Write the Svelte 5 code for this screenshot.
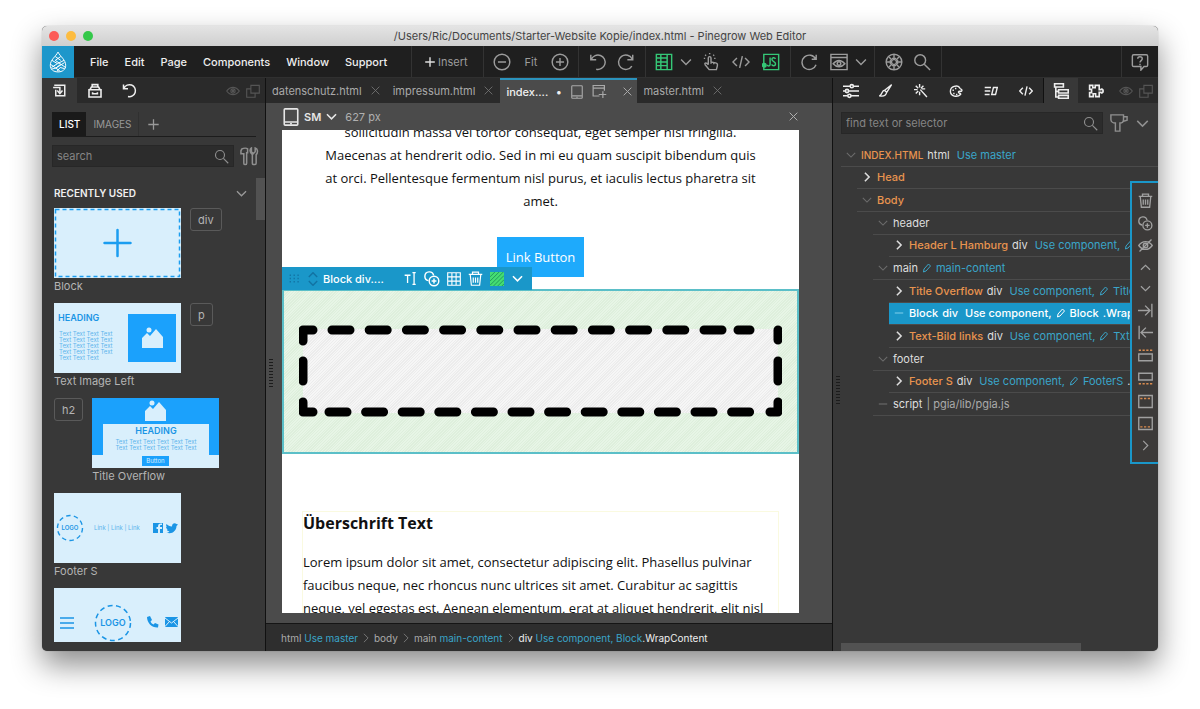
<script>
  const icons = {
    logo: '<path d="M10 1C8 5 3 8 3 13c0 4 3 6 7 6s7-2 7-6c0-5-5-8-7-12z"/><path d="M7.500 5l5 3.500M12.500 5l-5 3.500M4.500 8.500l5 3 6-3M3 12l5 3.500 4.500-3.500L17 15M4 16.500l4-1 4 3M7.500 8.500l5 3.500M16 10.500l-8 5M9.500 11.500L4 15M16 16l-4-1-3 3.500"/>',
    import: '<path d="M3 3h14v14H5V9M1.500 6h9v7"/><path d="M7 10l3.500 4 3.500-4" />',
    library: '<path d="M2.500 8.500h15v9h-15zM3.500 8.500L5.500 5h9l2 3.500M6.500 5V2h7v3M7 11.500v2h6v-2"/>',
    undo: '<path d="M2 2v5.500h6M2.600 7A8 8 0 1 1 8 18"/>',
    redo: '<path d="M17.500 2v5.500h-6M17 7a8 8 0 1 0-.5 7.500"/>',
    eye: '<path d="M1 10c5-7 13-7 18 0-5 7-13 7-18 0z"/><circle cx="10" cy="10" r="3"/><circle cx="10" cy="10" r="1" fill="currentColor"/>',
    windows: '<path d="M7 2h12v11H7zM7 7H1v12h12v-6"/>',
    plus: '<path d="M10 2v16M2 10h16"/>',
    search: '<circle cx="8" cy="8" r="6"/><path d="M12.500 12.500L19 19"/>',
    tools: '<path d="M2 2c2-1 5-1 6 0v4H7v11c0 2-3 2-3 0V7H1V4zM12 1v4l2 2 2-2V1c3 1 3 5 1 7v9c0 2-4 2-4 0V8c-3-2-3-6-1-7z"/>',
    down: '<path d="M3 6.500l7 7 7-7"/>',
    up: '<path d="M3 13.500l7-7 7 7"/>',
    right: '<path d="M6.500 3l7 7-7 7"/>',
    dash: '<path d="M3 10h14"/>',
    close: '<path d="M3 3l14 14M17 3L3 17"/>',
    minusRound: '<circle cx="10" cy="10" r="8.700"/><path d="M5.500 10h9"/>',
    plusRound: '<circle cx="10" cy="10" r="8.700"/><path d="M5.500 10h9M10 5.500v9"/>',
    layout: '<path d="M1.500 1.500h17v17h-17zM1.500 5.500h12M1.500 14h12M6.500 1.500v4M6.500 14v4.500M13.500 1.500v17M6.500 10h7M6.500 5.500V14M1.500 10h5"/>',
    hand: '<path d="M7 13V5.500c0-2 3-2 3 0V10l5 1c2 .5 2.500 1.500 2 3.500l-1 4H8L3.500 13c-1-1.500.5-2.500 2-1.500L7 13M10 10v2M13 11v1.500M8.500 1.500V0M4.500 3L3.500 2M12.500 3l1-1M3.500 6H2M13.500 6H15"/>',
    code: '<path d="M5.500 5.500L1 10l4.500 4.500M14.500 5.500L19 10l-4.500 4.500M11.500 3.500l-3 13"/>',
    js: '<path d="M2 1.500h16.500v17H2z"/><path d="M9 5v7.500c0 2.500-3 2.500-3 .5M15 6.500c-1-2-4-1.500-4 .5 0 3 4 2 4 5s-4 2.500-4 .5"/><circle cx="2.500" cy="13.500" r="2" fill="currentColor"/>',
    reload: '<path d="M18 2v5h-5M17.500 7a8 8 0 1 0 .3 6"/>',
    preview: '<path d="M1 1.500h18v17H1zM1 5h18"/><path d="M3.500 12c4-5 9-5 13 0-4 4.500-9 4.500-13 0z"/><circle cx="10" cy="11.800" r="2"/>',
    helm: '<circle cx="10" cy="10" r="8.700"/><path d="M10 2v5.500M10 12.500V18M2 10h5.500M12.500 10H18M4.500 4.500l4 4M11.500 11.500l4 4M15.500 4.500l-4 4M8.500 11.500l-4 4M8 5.500l2 2 2-2M8 14.500l2-2 2 2M5.500 8l2 2-2 2M14.500 8l-2 2 2 2"/>',
    help: '<path d="M3 2h14c1 0 1.500.5 1.500 1.500v10c0 1-.5 1.500-1.500 1.500h-2.500l-3.500 4v-4H3c-1 0-1.500-.5-1.500-1.500v-10C1.500 2.500 2 2 3 2z"/><path d="M7.500 6.500c0-3 5-3 5 0 0 2-2.500 2-2.500 4M10 12v1.500"/>',
    tablet: '<rect x="2.500" y="1" width="15" height="18" rx="1"/><path d="M3 15.500h14" /><path d="M9 17.500h2"/>',
    addPage: '<path d="M10 16H1.500V2h15v7M1.500 5.500h15M9 14h10M14.500 9.500v9"/>',
    sliders: '<path d="M0 4h9M13 4h7M0 10h3M7 10h13M0 16h6M10 16h10"/><circle cx="11" cy="4" r="2"/><circle cx="5" cy="10" r="2"/><circle cx="8" cy="16" r="2"/>',
    brush: '<path d="M18 1L8 9l3 3zM8 9c-4 0-3 5-7 8 5 1 9-1 10-5"/>',
    wand: '<path d="M9 8l9.500 10.500M8 0v5M8 11v5M0 8h5M11 7h5M2.500 2.500L6 6M13.500 2.500L10 6M2.500 13.500L6 10"/>',
    palette: '<path d="M15 5C12 1 2 3 2 10.500s10 9 14.500 4.500c1.500-2-4-1.500-3-4 1-2 5 1 5-2 0-2-3-1-3.500-4z"/><path fill="currentColor" stroke="none" d="M5 8h2v2H5zM8.500 5.500h2v2h-2zM6 12.500h2v2H6zM10 14h2v2h-2z"/>',
    align: '<path d="M1 5h9M1 10h8M1 15h7M13.500 5H19l-2.500 10H11z"/>',
    tree: '<path d="M2 1h11v4H2zM7 8.500h12v4H7zM7 15.500h12v3.500H7zM3.500 5v12.500H7M3.500 10.500H7"/>',
    puzzle: '<path d="M2 3h4v3h3V3h5v5.500h2c0-1.500 3-1.500 3 1.500s-3 3-3 1.500h-2V17H9.500v-3.500h-3V17H2v-5h2.500V8H2z"/>',
    filter: '<path d="M1 1h14v5c0 3-2 4-4 4v9H6v-9C3 10 1 8 1 6zM15 3h4v4l-4 1"/>',
    pencil: '<path d="M4 12L13 2l4 4L8 16l-5 2z"/>',
    trash: '<path d="M1 4.500h18M6 4.500v-3h8v3M3 5l1.500 14h11L17 5M7 8.500v7M10 8.500v7M13 8.500v7"/>',
    clone: '<circle cx="12.500" cy="12.500" r="6"/><path d="M12.500 9.500v6M9.500 12.500h6M5.500 12A5.500 5.500 0 1 1 12 5.500"/>',
    hide: '<path d="M1 10c5-7 13-7 18 0-5 7-13 7-18 0zM2 18L18 2"/><circle cx="10" cy="10" r="3"/>',
    indent: '<path d="M0 10h16M9.500 3.500L16 10l-6.500 6.500M18.500 1v18"/>',
    outdent: '<path d="M20 10H4M10.500 3.500L4 10l6.500 6.500M1.500 1v18"/>',
    before: '<path d="M1 8h18v9H1z"/><path stroke="#d98b4f" stroke-dasharray="3 2" d="M1 3h18"/>',
    after: '<path d="M1 3h18v9H1z"/><path stroke="#d98b4f" stroke-dasharray="3 2" d="M1 17h18"/>',
    first: '<path d="M1 2h18v16H1z"/><path stroke="#d98b4f" stroke-dasharray="3 2" d="M3 6h14"/>',
    last: '<path d="M1 2h18v16H1z"/><path stroke="#d98b4f" stroke-dasharray="3 2" d="M3 14.500h14"/>',
    text: '<path d="M1 5h9M5.500 5v12M13 1h5M13 19h5M15.500 1v18"/>',
    grid: '<path d="M1 1h18v18H1zM7 1v18M13 1v18M1 7h18M1 13h18"/>',
    hatch: '<path fill="#45dd72" stroke="none" d="M0 0h20v20H0z"/><path stroke="#229a5c" stroke-width="1.400" d="M0 7l7-7M0 13L13 0M0 19L19 0M5 20L20 5M11 20l9-9M17 20l3-3"/>',
    sort: '<path d="M4 7l6-6 6 6M4 13l6 6 6-6"/>',
    dots: '<path stroke-dasharray="2 4" d="M1 5h18M1 10h18M1 15h18"/>',
  }

  const menus = ['File', 'Edit', 'Page', 'Components', 'Window', 'Support']
  const panelTabs = ['sliders', 'brush', 'wand', 'palette', 'align', 'code', 'tree', 'puzzle']
  const treeTools = ['trash', 'clone', 'hide', 'up', 'down', 'indent', 'outdent', 'before', 'after', 'first', 'last', 'right']

  const nodes = [
    { depth: 0, state: 'open', name: 'INDEX.HTML', small: true, tag: 'html', use: 'Use master' },
    { depth: 1, state: 'closed', name: 'Head' },
    { depth: 1, state: 'open', name: 'Body' },
    { depth: 2, state: 'open', tag: 'header' },
    { depth: 3, state: 'closed', name: 'Header L Hamburg', tag: 'div', use: 'Use component,', edit: ' ' },
    { depth: 2, state: 'open', tag: 'main', edit: 'main-content' },
    { depth: 3, state: 'closed', name: 'Title Overflow', tag: 'div', use: 'Use component,', edit: 'Title' },
    { depth: 3, state: 'leaf', name: 'Block', tag: 'div', use: 'Use component,', edit: 'Block', cls: '.Wrap', selected: true },
    { depth: 3, state: 'closed', name: 'Text-Bild links', tag: 'div', use: 'Use component,', edit: 'TxtI' },
    { depth: 2, state: 'open', tag: 'footer' },
    { depth: 3, state: 'closed', name: 'Footer S', tag: 'div', use: 'Use component,', edit: 'FooterS', cls: '.' },
    { depth: 2, state: 'leaf', tag: 'script', note: '| pgia/lib/pgia.js' },
  ]
  const toggles = { open: 'down', closed: 'right', leaf: 'dash' }

  // dashed frame around the empty block
  let frame = 'M4 16V5H14M439 5H451M479 5V15M479 36V56M479 77V87H471M4 77V87H14M4 36V56'
  for (let i = 0; i < 11; i++) frame += `M${33 + i * 37.2} 5h18`
  for (let i = 0; i < 12; i++) frame += `M${30 + i * 36.6} 87h18`

  let search = $state('')
  let selector = $state('')
  let tab = $state('LIST')
</script>

{#snippet icon(name, size = 16, weight = 1.6)}
  <svg width={size} height={size} viewBox="0 0 20 20" fill="none" stroke="currentColor" stroke-width={weight} aria-hidden="true">{@html icons[name]}</svg>
{/snippet}

{#snippet tool(name, size = 18, weight = 1.6)}
  <button class="t-{name}" aria-label={name}>{@render icon(name, size, weight)}</button>
{/snippet}

{#snippet mountains(x, y)}
  <path fill="#d9effc" d="M{x} {y + 12}v-4l5-5 3 3 6-7 7 8v11h-21z" />
  <circle fill="#d9effc" cx={x + 7} cy={y} r="2.500" />
{/snippet}

<div class="window">
  <header class="titlebar">
    <div class="lights"><i class="red"></i><i class="yellow"></i><i class="green"></i></div>
    <span>/Users/Ric/Documents/Starter-Website Kopie/index.html - Pinegrow Web Editor</span>
  </header>

  <div class="toolbar">
    <div class="logo">{@render icon('logo', 22, 0.9)}</div>
    <nav class="menu">
      {#each menus as m}<button>{m}</button>{/each}
    </nav>
    <div class="group insert"><button>{@render icon('plus', 12, 2.4)} Insert</button></div>
    <div class="group zoom">{@render tool('minusRound')}<span>Fit</span>{@render tool('plusRound')}</div>
    <div class="group history">{@render tool('undo')}{@render tool('redo')}</div>
    <div class="group modes">
      <span class="on">{@render tool('layout')}</span>
      {@render tool('down', 14, 2)}
      {@render tool('hand')}
      {@render tool('code')}
      <span class="on">{@render tool('js')}</span>
    </div>
    <div class="group view">{@render tool('reload')}{@render tool('preview')}{@render tool('down', 14, 2)}</div>
    <div class="group find">{@render tool('helm')}{@render tool('search')}</div>
    <div class="group help">{@render tool('help')}</div>
  </div>

  <div class="workspace">
    <aside class="left">
      <div class="strip">
        <button class="strip-btn active" aria-label="Insert panel">{@render icon('import', 15, 2)}</button>
        <button class="strip-btn" aria-label="Library">{@render icon('library', 16, 2)}</button>
        <button class="strip-btn" aria-label="History">{@render icon('undo', 15, 2)}</button>
        <div class="strip-end">{@render tool('eye', 14)}{@render tool('windows', 14)}</div>
      </div>
      <div class="list-tabs">
        <button class:current={tab === 'LIST'} onclick={() => (tab = 'LIST')}>LIST</button>
        <button class:current={tab === 'IMAGES'} onclick={() => (tab = 'IMAGES')}>IMAGES</button>
        <button class="add" aria-label="Add list">{@render icon('plus', 13, 2)}</button>
      </div>
      <div class="search-row">
        <div class="field">
          <input aria-label="Search" placeholder="search" bind:value={search} />
          {@render icon('search', 15, 1.5)}
        </div>
        {@render tool('tools', 19)}
      </div>
      <div class="section">
        <h2>RECENTLY USED</h2>
        {@render tool('down', 13, 2)}
      </div>
      <div class="blocks">
        <figure>
          <svg viewBox="0 0 127 70">
            <rect width="127" height="70" fill="#d9effc" />
            <rect x="1.500" y="1.500" width="124" height="67" fill="none" stroke="#1b9df0" stroke-width="1.500" stroke-dasharray="4 3" />
            <path stroke="#1b9df0" stroke-width="2.500" stroke-linecap="round" d="M63.500 22v26M50.500 35h26" />
          </svg>
          <figcaption>Block</figcaption>
        </figure>
        <button class="tag">div</button>
        <figure>
          <svg viewBox="0 0 127 70">
            <rect width="127" height="70" fill="#d9effc" />
            <rect x="74" y="11" width="48" height="48" fill="#1ba1fc" />
            {@render mountains(88, 27)}
            <text x="4" y="18" class="card-heading">HEADING</text>
            {#each [0, 1, 2, 3] as i}<text x="5" y={33 + i * 6} class="card-text">Text Text Text Text</text>{/each}
            <text x="5" y="57" class="card-text">Text Text Text</text>
          </svg>
          <figcaption>Text Image Left</figcaption>
        </figure>
        <button class="tag">p</button>
        <button class="tag">h2</button>
        <figure>
          <svg viewBox="0 0 127 70">
            <rect width="127" height="70" fill="#1ba1fc" />
            <path fill="#d9effc" d="M0 57h11V26h106v31h10v13H0z" />
            {@render mountains(53, 5)}
            <text x="64" y="36" text-anchor="middle" class="card-heading">HEADING</text>
            <text x="64" y="46" text-anchor="middle" class="card-text">Text Text Text Text Text Text</text>
            <text x="64" y="52" text-anchor="middle" class="card-text">Text Text Text Text Text Text</text>
            <rect x="50" y="58" width="27" height="10" fill="#1ba1fc" />
            <text x="63.500" y="65" text-anchor="middle" class="card-btn">Button</text>
          </svg>
          <figcaption>Title Overflow</figcaption>
        </figure>
        <figure>
          <svg viewBox="0 0 127 70">
            <rect width="127" height="70" fill="#d9effc" />
            <circle cx="16" cy="35" r="12.500" fill="none" stroke="#1b95e5" stroke-width="1.400" stroke-dasharray="4.500 3.300" />
            <text x="16" y="37" text-anchor="middle" class="card-logo small">LOGO</text>
            <text x="40" y="37" class="card-text">Link | Link | Link</text>
            <path fill="#1b95e5" d="M99 30h10v10h-3v-4h2v-2h-2c0-2 0-2 2-2v-1.500c-3-.3-4 .5-4 3.500h-1.500v2H104v4h-5z" />
            <path fill="#1b95e5" d="M124 31.500l-1.500 1.500c0 5-5 9-10 6.500 1.500 0 2.500-.5 3-1-2-.5-2.500-1-2.500-2h1c-1.500-.8-2-1.500-2-2.500l1 .2c-1-1-1-2-.5-3.200 1.500 1.500 3 2.500 5.500 2.500 0-3.500 3-4 4.500-2.500z" />
          </svg>
          <figcaption>Footer S</figcaption>
        </figure>
        <figure>
          <svg viewBox="0 0 127 70">
            <rect width="127" height="70" fill="#d9effc" />
            <path stroke="#1b95e5" stroke-width="1.500" d="M6 30h14M6 35h14M6 40h14" />
            <circle cx="59" cy="35" r="17.500" fill="none" stroke="#1b95e5" stroke-width="1.500" stroke-dasharray="5 3.500" />
            <text x="59" y="38" text-anchor="middle" class="card-logo">LOGO</text>
            <path fill="#1b95e5" d="M93 29l3-1 2 4-1.500 1.500c.5 1.500 2 2.500 3 3l1.500-1.500 3.500 1.500-.5 3c-6 .5-11-4.500-11-10.500z" />
            <rect x="111" y="29" width="13" height="10" rx="1" fill="#1b95e5" />
            <path fill="none" stroke="#d9effc" d="M111 30l6.500 5 6.500-5M111 38.500l4.500-5M124 38.500l-4.500-5" />
          </svg>
        </figure>
      </div>
      <div class="v-scroll"></div>
    </aside>

    <main class="center">
      <div class="strip files">
        <div class="file">datenschutz.html {@render tool('close', 11, 1.5)}</div>
        <div class="file">impressum.html {@render tool('close', 11, 1.5)}</div>
        <div class="file open">
          index.... <b>•</b>
          {@render tool('tablet', 14)}{@render tool('addPage', 15)}{@render tool('close', 11, 1.8)}
        </div>
        <div class="file">master.html {@render tool('close', 11, 1.5)}</div>
      </div>
      <div class="device">
        {@render icon('tablet', 18, 1.8)}
        <button class="size">SM {@render icon('down', 13, 2.4)}</button>
        <span>627 px</span>
        {@render tool('close', 11, 1.8)}
      </div>
      <div class="page">
        <p class="intro">
          sollicitudin massa vel tortor consequat, eget semper nisl fringilla.<br />
          Maecenas at hendrerit odio. Sed in mi eu quam suscipit bibendum quis<br />
          at orci. Pellentesque fermentum nisl purus, et iaculis lectus pharetra sit<br />
          amet.
        </p>
        <a class="link-button" href="#link">Link Button</a>
        <div class="block">
          <div class="block-bar">
            <span class="dim">{@render icon('dots', 13, 2)}</span>
            <span class="dim">{@render icon('sort', 14, 2)}</span>
            <span class="block-name">Block div....</span>
            {@render tool('text', 13, 2)}
            {@render tool('clone', 16, 1.8)}
            {@render tool('grid', 14)}
            {@render tool('trash', 15)}
            {@render tool('hatch', 14)}
            {@render tool('down', 13, 2.4)}
          </div>
          <div class="block-body">
            <svg viewBox="0 0 483 92" fill="none" stroke="#000" stroke-width="9" stroke-linecap="round" stroke-linejoin="round"><path d={frame} /></svg>
          </div>
        </div>
        <section class="article">
          <h3>Überschrift Text</h3>
          <p>
            Lorem ipsum dolor sit amet, consectetur adipiscing elit. Phasellus pulvinar<br />
            faucibus neque, nec rhoncus nunc ultrices sit amet. Curabitur ac sagittis<br />
            neque, vel egestas est. Aenean elementum, erat at aliquet hendrerit, elit nisl
          </p>
        </section>
      </div>
      <div class="crumbs">
        <span>html <a href="#html">Use master</a></span>{@render icon('right', 12)}
        <span>body</span>{@render icon('right', 12)}
        <span>main <a href="#main">main-content</a></span>{@render icon('right', 12)}
        <span class="here">div <a href="#block">Use component, Block</a>.WrapContent</span>
      </div>
      <i class="grip"></i>
    </main>

    <aside class="right">
      <div class="strip">
        {#each panelTabs as t}
          <button class="strip-btn" class:active={t === 'tree'} aria-label={t}>{@render icon(t, t === 'tree' || t === 'sliders' || t === 'puzzle' ? 16 : 14, 2)}</button>
        {/each}
        <div class="strip-end">{@render tool('eye', 14)}{@render tool('windows', 14)}</div>
      </div>
      <div class="search-row">
        <div class="field">
          <input aria-label="Find text or selector" placeholder="find text or selector" bind:value={selector} />
          {@render icon('search', 15, 1.5)}
        </div>
        {@render tool('filter', 18)}
        {@render tool('down', 15, 2)}
      </div>
      <div class="tree">
        {#each nodes as n}
          <div class="node d{n.depth}" class:selected={n.selected}>
            <button class="toggle {n.state}" aria-label="Toggle">{@render icon(toggles[n.state], 12, n.state === 'closed' ? 2.6 : 1.8)}</button>
            {#if n.name}<span class="name" class:small={n.small}>{n.name}</span>{/if}
            {#if n.tag}<span>{n.tag}</span>{/if}
            {#if n.use}<a class="use" href="#component">{n.use}</a>{/if}
            {#if n.edit}<a class="edit" href="#edit">{@render icon('pencil', 10, 2)}{n.edit}</a>{/if}
            {#if n.cls}<span>{n.cls}</span>{/if}
            {#if n.note}<span class="note">{n.note}</span>{/if}
          </div>
        {/each}
      </div>
      <div class="tree-tools">
        {#each treeTools as t}{@render tool(t, t === 'up' || t === 'down' || t === 'right' ? 13 : 15, 1.8)}{/each}
      </div>
      <div class="h-scroll"></div>
      <i class="grip"></i>
    </aside>
  </div>
</div>

<style>
  :global(body) { margin: 0; background: #fff; }
  * { box-sizing: border-box; }
  svg { display: block; flex: none; }
  button { display: flex; align-items: center; padding: 0; border: 0; background: none; color: inherit; font: inherit; cursor: pointer; }
  a { color: #3aa5c9; text-decoration: none; }
  p, h2, h3, figure { margin: 0; }

  .window {
    display: flex; flex-direction: column;
    height: calc(100vh - 84px); min-height: 560px; margin: 26px 42px 58px;
    border-radius: 5px; overflow: hidden; background: #383838;
    box-shadow: 0 0 1px rgba(0,0,0,.4), 0 14px 30px rgba(0,0,0,.45);
    color: #b4b4b4; font: 11px/16px Inter, "Liberation Sans", sans-serif;
  }
  .titlebar {
    position: relative; display: flex; align-items: center; justify-content: center;
    flex: none; height: 20px; background: linear-gradient(#e4e4e4, #cfcfcf);
    color: #444;
  }
  .lights { position: absolute; left: 7px; display: flex; gap: 7px; }
  .lights i { width: 10px; height: 10px; border-radius: 50%; }
  .red { background: #fc5b57; }
  .yellow { background: #fdbc40; }
  .green { background: #34c84a; }

  .toolbar { display: flex; flex: none; height: 32px; background: #1f1f1f; color: #9c9c9c; border-bottom: 1px solid #303030; }
  .logo { display: flex; align-items: center; justify-content: center; width: 32px; height: 32px; background: #1d97cb; color: #fff; }
  .menu { display: flex; gap: 16px; width: 337px; padding-left: 16px; color: #eee; font-weight: 500; }
  .group { display: flex; align-items: center; justify-content: space-between; border-left: 1px solid #333; padding: 0 10px; }
  .insert { width: 72px; padding: 0 12px; }
  .insert button { gap: 2px; }
  .insert svg { color: #ddd; }
  .zoom { width: 95px; padding: 0 9px; }
  .history { width: 67px; }
  .modes, .view { justify-content: flex-start; gap: 12px; padding: 0 9px; }
  .modes { width: 145px; }
  .view { width: 84px; }
  .modes :global(.t-down), .view :global(.t-down) { margin: 0 -3px 0 -6px; }
  .on { color: #35c877; }
  .find { width: 68px; border-right: 1px solid #333; }
  .help { width: 37px; margin-left: auto; padding: 0 9px; }

  .workspace { display: grid; grid-template-columns: 224px minmax(0, 1fr) 326px; flex: 1; min-height: 0; }
  .left, .center, .right { position: relative; display: flex; flex-direction: column; min-width: 0; min-height: 0; }
  .left { border-right: 1px solid #111; }
  .right { border-left: 1px solid #111; overflow: hidden; }
  .center { background: #4b4b4b; }
  .strip { display: flex; flex: none; height: 25px; background: #2a2a2a; color: #eee; }
  .strip-btn { justify-content: center; width: 35px; }
  .strip-btn.active { background: #383838; }
  .right .strip-btn.active { border-left: 1px solid #111; }
  .strip-end { display: flex; gap: 6px; margin-left: auto; padding-right: 5px; color: #555; }

  .list-tabs { display: flex; height: 25px; margin: 9px 9px 0 10px; border-bottom: 1px solid #1c1c1c; font-size: 10px; }
  .list-tabs button { padding: 0 6px 0 7px; color: #999; }
  .list-tabs .current { background: #1a1a1a; color: #fff; font-weight: 500; }
  .list-tabs .add { padding: 0 8px; border-left: 1px solid #303030; }
  .search-row { display: flex; align-items: center; gap: 6px; margin: 8px 6px 0 10px; color: #8f8f8f; }
  .field { display: flex; align-items: center; flex: 1; min-width: 0; height: 22px; padding: 0 4px; background: #2c2c2c; border: 1px solid #272727; }
  .field input { flex: 1; min-width: 0; padding: 0; border: 0; outline: 0; background: none; color: #ddd; font: inherit; }
  .field input::placeholder { color: #858585; opacity: 1; }
  .section { display: flex; align-items: center; justify-content: space-between; margin: 18px 17px 7px 12px; }
  .section h2 { color: #f0f0f0; font-size: 10px; line-height: 16px; font-weight: 600; }
  .section button { color: #999; }
  .blocks { display: flex; flex-wrap: wrap; align-content: flex-start; align-items: flex-start; gap: 9px; flex: 1; min-height: 0; width: 190px; margin: 0 0 9px 12px; overflow: hidden; }
  .blocks figure { width: 127px; }
  .blocks figure svg { width: 100%; }
  .blocks figcaption { height: 16px; }
  .tag { height: 23px; padding: 0 7px; border: 1px solid #5a5a5a; border-radius: 3px; }
  .card-heading { fill: #1b95e5; font-size: 9px; font-weight: 600; }
  .card-text { fill: #5eb5ec; font-size: 6px; }
  .card-btn { fill: #d9effc; font-size: 6px; }
  .card-logo { fill: #1b95e5; font-size: 9px; font-weight: 600; }
  .card-logo.small { font-size: 6px; }
  .v-scroll { position: absolute; top: 100px; right: 0; width: 9px; height: 42px; background: #525252; }

  .files { color: #a9a9a9; }
  .file { display: flex; align-items: center; gap: 8px; padding: 0 6px; }
  .file button { color: #777; }
  .file.open { width: 137px; border-top: 2px solid #2b93bd; background: #4b4b4b; color: #f0f0f0; font-weight: 500; }
  .file.open button { color: #a9a9a9; }
  .file.open button:last-child { margin-left: auto; margin-right: -2px; }
  .device { display: flex; align-items: center; flex: none; height: 27px; padding: 0 33px 0 16px; color: #b0b0b0; }
  .device > svg { color: #e6e6e6; }
  .device .size { gap: 4px; margin: 0 7px 0 4px; color: #e6e6e6; font-weight: 600; }
  .device > :global(.t-close) { margin-left: auto; }
  .page { display: flex; flex-direction: column; flex: 1; min-height: 0; margin: 0 33px 10px 16px; overflow: hidden; background: #fff; color: #111; font: 13px/23px "Open Sans", "Noto Sans", sans-serif; }
  .intro { flex: none; margin-top: -9px; text-align: center; white-space: nowrap; }
  .link-button { flex: none; align-self: center; margin-top: 24px; padding: 9px 9px 8px; background: #1eaafc; color: #fff; }
  .block { position: relative; flex: none; margin-top: 12px; padding: 34px 15px 35px; border: 2px solid #5bbfc8; background: repeating-linear-gradient(-45deg, #e7f5e6 0 1px, #deefdc 1px 2px); }
  .block-body { background: repeating-linear-gradient(-45deg, #f6f6f6 0 1px, #ececec 1px 2px) content-box; padding: 4px; }
  .block-body svg { width: calc(100% + 8px); margin: -4px; }
  .block-bar { position: absolute; top: -24px; left: -2px; display: flex; align-items: center; gap: 7px; width: 250px; height: 23px; padding: 0 8px 0 7px; background: #1a97c9; color: #fff; font: 500 11px/16px Inter, "Liberation Sans", sans-serif; }
  .block-name { flex: 1; margin-left: -4px; white-space: nowrap; }
  .dim { margin-right: -3px; color: #1273a3; }
  .dim + .dim { margin-right: 0; }
  .article { flex: none; margin: 57px 20px 0; border: 1px solid #fafae0; white-space: nowrap; }
  .article h3 { font-size: 16px; line-height: 23px; }
  .article p { margin-top: 16px; }
  .crumbs { display: flex; align-items: center; gap: 2px; flex: none; height: 28px; padding-left: 15px; border-top: 1px solid #151515; background: #2e2e2e; color: #aaa; font-size: 10px; white-space: nowrap; }
  .crumbs svg { color: #777; }
  .crumbs .here { color: #eee; }
  .grip { position: absolute; left: 3px; top: 49%; width: 4px; height: 30px; background: repeating-linear-gradient(#1c1c1c 0 1px, transparent 1px 3px); }
  .right .grip { top: 52%; }

  .right .search-row { margin: 9px 8px 0; gap: 7px; }
  .tree { display: grid; grid-auto-rows: 1fr; height: 272px; margin: 10px 0 0 8px; }
  .node { display: flex; align-items: center; gap: 4px; border-bottom: 1px solid #4b4b4b; color: #dedede; white-space: nowrap; overflow: hidden; margin-right: 27px; min-width: 0; }
  .d0 { margin-right: 0; }
  .d1 { margin-left: 16px; }
  .d2 { margin-left: 32px; }
  .d3 { margin-left: 48px; }
  .toggle { margin-left: 4px; color: #6c6c6c; }
  .toggle.closed { color: #ddd; }
  .name { color: #e8944f; font-weight: 500; }
  .name.small { font-size: 10px; }
  .use { margin-left: 3px; }
  .edit { display: flex; align-items: center; gap: 4px; }
  .note { color: #aaa; }
  .selected { background: #1a97c9; font-weight: 500; }
  .selected, .selected .name, .selected a { color: #fff; }
  .selected .toggle { color: #79cbe8; }
  .tree-tools { position: absolute; top: 103px; right: 0; display: flex; flex-direction: column; align-items: center; justify-content: space-around; width: 28px; height: 283px; padding: 6px 0; border: 2px solid #1a97c9; border-right: 0; background: #3c3a39; color: #a0a0a0; }
  .h-scroll { position: absolute; left: 8px; bottom: 0; width: 240px; height: 8px; background: #525252; }
</style>
